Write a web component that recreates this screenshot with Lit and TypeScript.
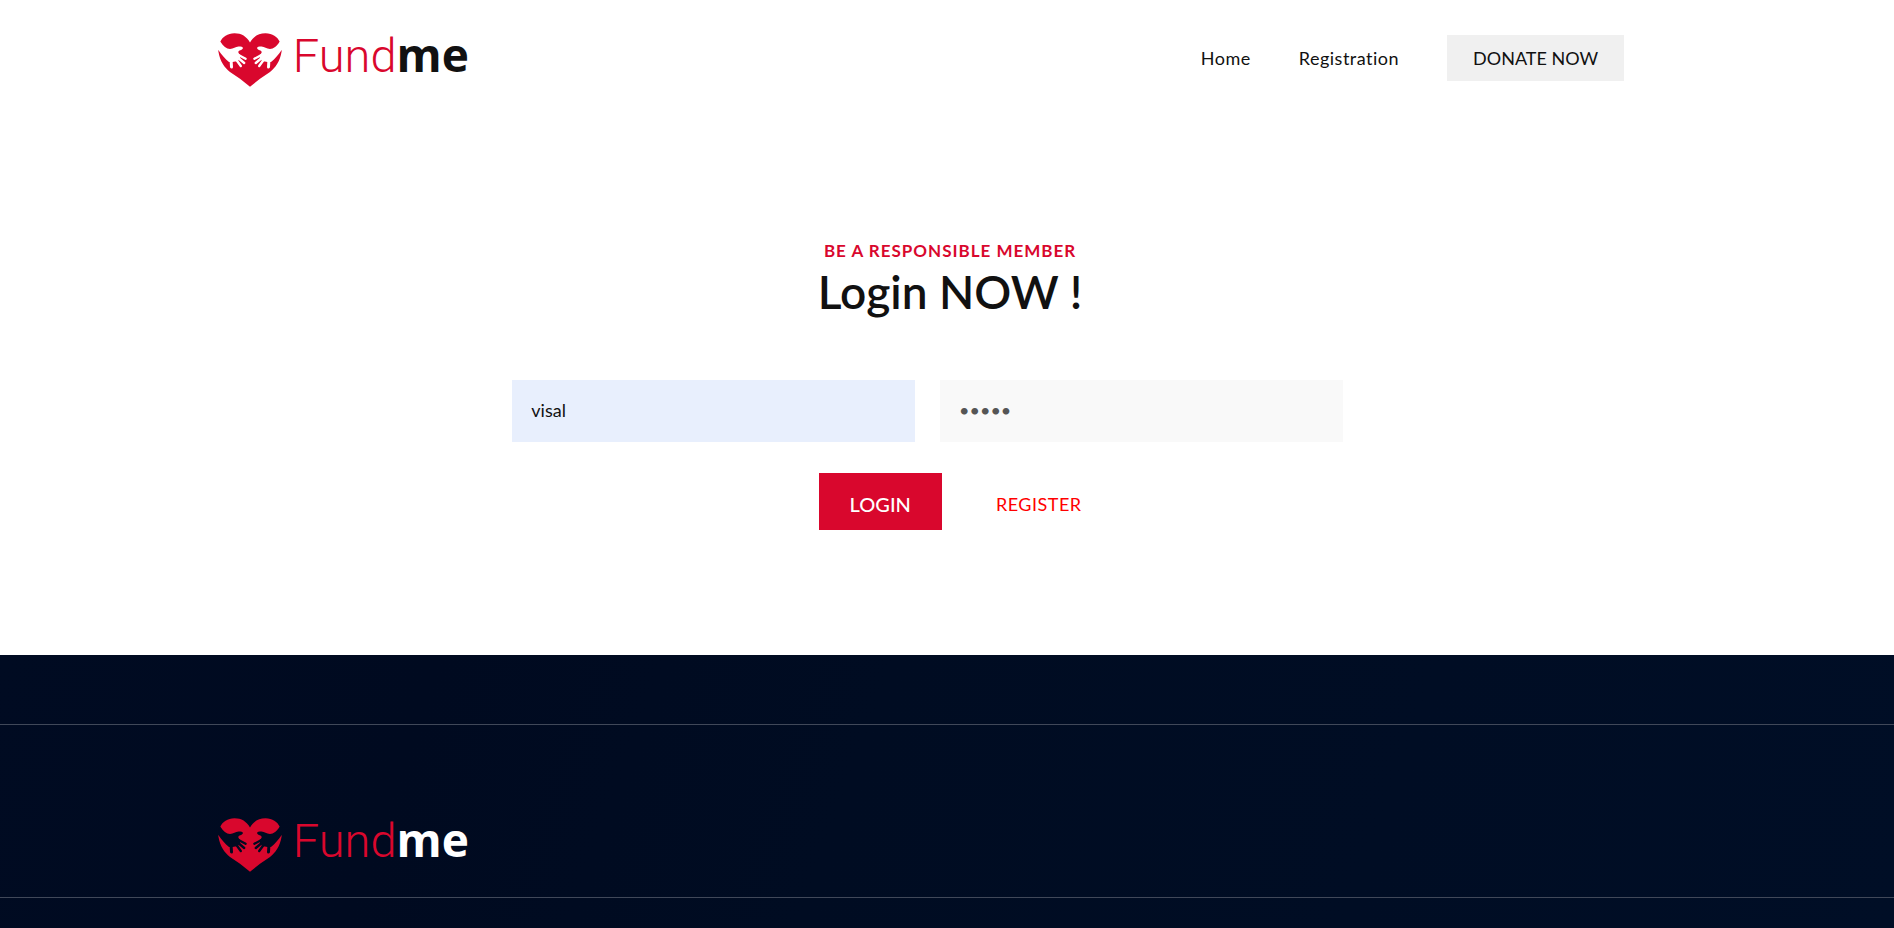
import { LitElement, html, css, svg } from "lit";
import { customElement, property } from "lit/decorators.js";

const hand = svg`
  <path d="M-3 5L2.600 9C5 13.200 8.500 15.800 12 16c3.500 0 5.500-2.500 8.500-2.500 3 0 4.800.4 4.300 1.900C24.200 17.200 20.300 17 20.300 19c0 1.500 1.500 2.500 3 3.400L20 28l-5.500 1-3.500 0C7 26 3.500 21.500.5 17.300L-3 17z"/>
  <g fill="none" stroke="#000" stroke-width="2.400" stroke-linecap="round">
    <path d="M20 21.800L27.600 25.800"/>
    <path d="M18.500 23.500L26.200 30"/>
    <path d="M17 25L22.800 33"/>
    <path stroke-width="3" d="M13 26L13.500 34"/>
  </g>
`;

@customElement("fund-logo")
class FundLogo extends LitElement {
  @property() label = "Fundme";

  static styles = css`
    :host { display: block; }
    .logo { display: flex; align-items: flex-start; gap: 11px; text-decoration: none; color: #d9072d; }
    .mark { width: 64px; height: 54px; display: block; flex: none; }
    .name { font: 300 47px/42px Roboto, sans-serif; }
    .bold { font-family: "Open Sans", sans-serif; font-size: 46px; font-weight: 700; color: var(--logo-ink, #111); }
  `;

  render() {
    return html`
      <a class="logo" href="#" aria-label=${this.label}>
        <svg class="mark" viewBox="0 0 64 54" aria-hidden="true">
          <mask id="hands" maskUnits="userSpaceOnUse" x="0" y="0" width="64" height="54">
            <rect width="64" height="54" fill="#fff"/>
            ${hand}
            <g transform="translate(64 0) scale(-1 1)">${hand}</g>
          </mask>
          <path mask="url(#hands)" fill="#d9072d" d="M32 9.500C28.500 3.500 23.500.3 16.500.3 9.500.3 4.500 4 2.300 8.700.5 12 0 15 .4 18.500 2 28.500 6.500 34.500 12 39L22 45.800 32 53.800 42 45.800 52 39C57.500 34.500 62 28.500 63.600 18.500 64 15 63.500 12 61.700 8.700 59.500 4 54.500.3 47.500.3 40.500.3 35.500 3.500 32 9.500z"/>
        </svg>
        <span class="name">Fund<span class="bold">me</span></span>
      </a>
    `;
  }
}

@customElement("app-root")
class AppRoot extends LitElement {
  static styles = css`
    :host {
      display: flex;
      flex-direction: column;
      min-height: 100vh;
      background: #fff;
      color: #111;
      font: 400 18px/28px Lato, sans-serif;
    }
    * { box-sizing: border-box; }
    a { text-decoration: none; color: inherit; }
    .header {
      display: flex;
      justify-content: space-between;
      align-items: flex-start;
      padding: 33px 14.25% 0 11.5%;
    }
    .nav { display: flex; align-items: center; gap: 48px; padding-top: 2px; letter-spacing: 0.5px; }
    .donate { background: #f0f0f0; padding: 9px 26px; letter-spacing: 0; }
    .login { padding: 150px 29.1% 125px 27.05%; }
    .titles { text-align: center; padding-left: 45px; }
    .sub { margin: 0; font-size: 17px; line-height: 28px; font-weight: 700; letter-spacing: 1px; color: #d9072d; }
    .title { margin: 0 0 61px; font-size: 46px; line-height: 54px; font-weight: 600; }
    .fields { display: grid; grid-template-columns: 1fr 1fr; gap: 25px; }
    .field {
      width: 100%;
      height: 62px;
      border: 0;
      border-radius: 0;
      padding: 0 19px 2px;
      font: 400 18px/28px Lato, sans-serif;
      color: #555;
      background: #f9f9f9;
    }
    .filled { background: #e8effd; color: #111; }
    .actions { display: flex; justify-content: center; align-items: center; gap: 54px; margin-top: 31px; padding-left: 45px; }
    .submit {
      border: 0;
      height: 57px;
      padding: 4px 31px 0;
      background: #d9072d;
      color: #fff;
      font: 500 20px/28px Lato, sans-serif;
    }
    .register { color: #f00; padding-top: 5px; letter-spacing: 0.5px; }
    .footer {
      flex: 1;
      background: linear-gradient(110deg, #000b22 0%, #000a20 22%, #000c22 45%, #000e26 100%);
      padding-top: 69px;
    }
    .band {
      border: solid #404859;
      border-width: 1px 0;
      padding: 93px 11.5% 25px;
      --logo-ink: #fff;
    }
  `;

  render() {
    return html`
      <header class="header">
        <fund-logo></fund-logo>
        <nav class="nav">
          <a href="#">Home</a>
          <a href="#">Registration</a>
          <a class="donate" href="#">DONATE NOW</a>
        </nav>
      </header>
      <main class="login">
        <div class="titles">
          <p class="sub">BE A RESPONSIBLE MEMBER</p>
          <h1 class="title">Login NOW !</h1>
        </div>
        <form @submit=${(e: Event) => e.preventDefault()}>
          <div class="fields">
            <input class="field filled" type="text" aria-label="Username" .value=${"visal"} />
            <input class="field" type="password" aria-label="Password" .value=${"visal"} />
          </div>
          <div class="actions">
            <button class="submit" type="submit">LOGIN</button>
            <a class="register" href="#">REGISTER</a>
          </div>
        </form>
      </main>
      <footer class="footer">
        <div class="band"><fund-logo></fund-logo></div>
      </footer>
    `;
  }
}
